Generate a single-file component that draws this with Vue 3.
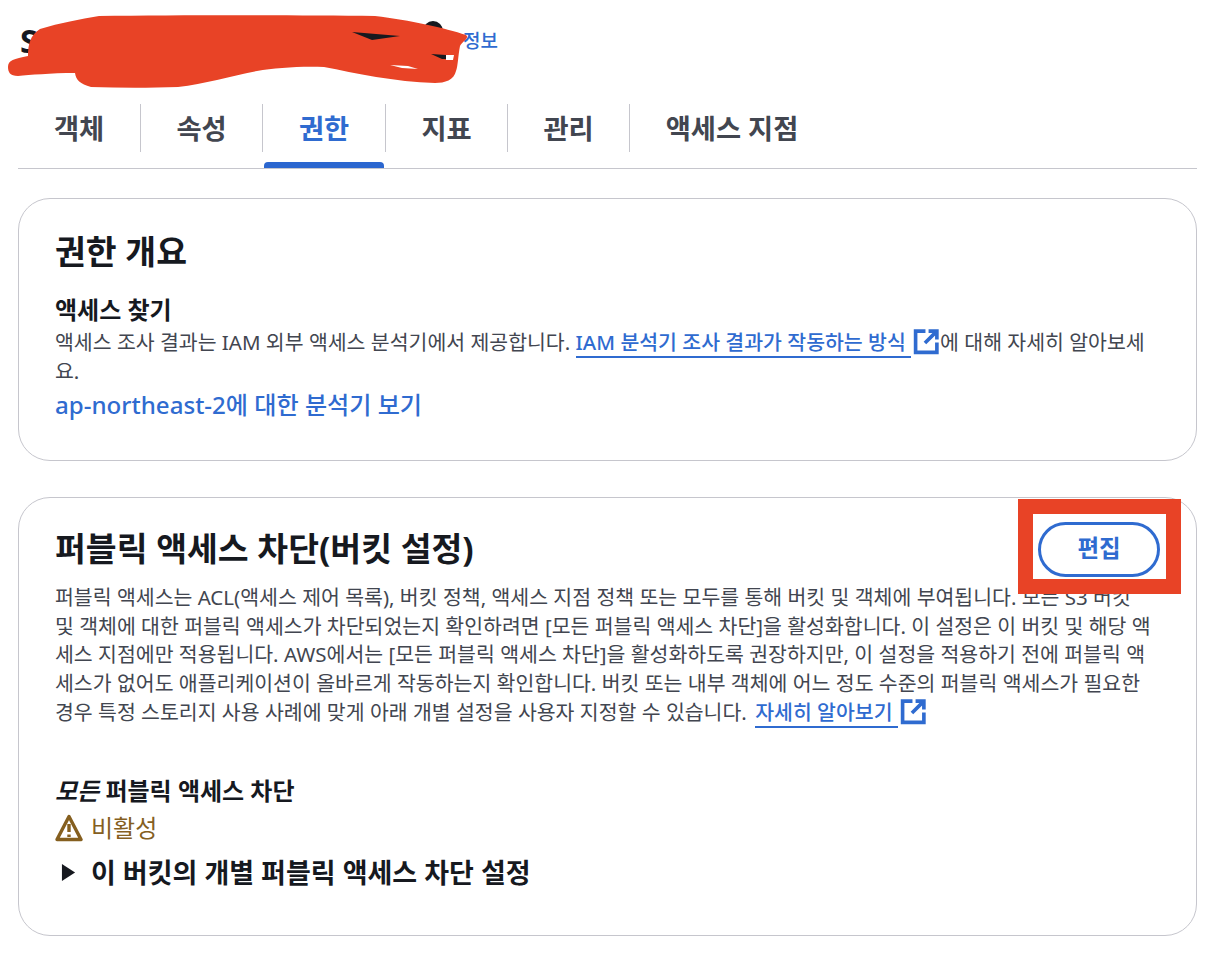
<script setup>
const tabs = [
  { label: "객체", width: 123 },
  { label: "속성", width: 122 },
  { label: "권한", width: 123, active: true },
  { label: "지표", width: 122 },
  { label: "관리", width: 122 },
  { label: "액세스 지점", width: 204 },
];
</script>

<template>
  <div class="page">
    <header class="head">
      <h1 class="bucket">S</h1>
      <a class="info">정보</a>
    </header>

    <nav class="tabs">
      <div
        v-for="tab in tabs"
        :key="tab.label"
        class="tab"
        :class="{ active: tab.active }"
        :style="{ width: tab.width + 'px' }"
      >
        <span class="tab-label">{{ tab.label }}</span>
      </div>
    </nav>

    <section class="card first">
      <h2>권한 개요</h2>
      <h3 class="find">액세스 찾기</h3>
      <p class="body">
        액세스 조사 결과는 IAM 외부 액세스 분석기에서 제공합니다.
        <a class="link">IAM 분석기 조사 결과가 작동하는 방식&nbsp;</a><svg class="ext" viewBox="0 0 26 26"><path d="M12 3H2.5v20.5H23V14M15 3h8v8M23 3 11.5 14.5" /></svg>에 대해 자세히 알아보세<br />요.
      </p>
      <a class="analyzer">ap-northeast-2에 대한 분석기 보기</a>
    </section>

    <section class="card second">
      <div class="card-head">
        <h2>퍼블릭 액세스 차단(버킷 설정)</h2>
        <button class="edit">편집</button>
      </div>
      <p class="body long">
        퍼블릭 액세스는 ACL(액세스 제어 목록), 버킷 정책, 액세스 지점 정책 또는 모두를 통해 버킷 및 객체에 부여됩니다. 모든 S3 버킷<br />
        및 객체에 대한 퍼블릭 액세스가 차단되었는지 확인하려면 [모든 퍼블릭 액세스 차단]을 활성화합니다. 이 설정은 이 버킷 및 해당 액<br />
        세스 지점에만 적용됩니다. AWS에서는 [모든 퍼블릭 액세스 차단]을 활성화하도록 권장하지만, 이 설정을 적용하기 전에 퍼블릭 액<br />
        세스가 없어도 애플리케이션이 올바르게 작동하는지 확인합니다. 버킷 또는 내부 객체에 어느 정도 수준의 퍼블릭 액세스가 필요한<br />
        경우 특정 스토리지 사용 사례에 맞게 아래 개별 설정을 사용자 지정할 수 있습니다.
        <a class="link more">자세히 알아보기&nbsp;</a><svg class="ext" viewBox="0 0 26 26"><path d="M12 3H2.5v20.5H23V14M15 3h8v8M23 3 11.5 14.5" /></svg>
      </p>
      <h3 class="all"><em>모든</em> 퍼블릭 액세스 차단</h3>
      <div class="status">
        <svg class="warn" viewBox="0 0 28 28">
          <path class="warn-tri" d="M14 2.5 26 25.5H2Z" />
          <path class="warn-bang" d="M14 10v8M14 20.5v2.5" />
        </svg>
        <span>비활성</span>
      </div>
      <div class="expand">
        <svg class="caret" viewBox="0 0 16 18"><path d="M1 0 15 9 1 18Z" /></svg>
        <span>이 버킷의 개별 퍼블릭 액세스 차단 설정</span>
      </div>
    </section>

    <!-- 스크린샷 위에 칠해진 표시 -->
    <svg class="scribble" viewBox="0 0 520 100">
      <circle cx="433" cy="31" r="10" fill="#16191f" />
      <path
        d="M8 67C8 60 14 59 28 56 28 45 30 35 40 29 60 23 80 19 99 16 180 15 300 15 375 16 410 20 445 28 466 35 470 38 462 42 460 46 458 56 458 66 456 71 454 80 445 83 435 83 395 82 355 73 324 67 300 66 275 68 257 71 230 76 205 84 178 87 150 88 120 88 91 87 80 84 76 80 75 73 50 73 30 75 18 76 10 76 8 72 8 67Z"
        fill="#e84326"
      />
      <path d="M352 32 400 36 372 40Z" fill="#16191f" />
      <path d="M431 54 446 55 446 59 442 59Z" fill="#16191f" />
      <path d="M446 55 454 55 453 60 446 60Z" fill="#fff" />
      <path d="M390 65 408 66 418 69 402 68Z" fill="#fff" />
    </svg>
    <div class="marker"></div>
  </div>
</template>

<style scoped>
.page {
  position: relative;
  width: 1224px;
  height: 954px;
  box-sizing: border-box;
  padding: 0 27px 0 18px;
  overflow: hidden;
  background: #fff;
  color: #16191f;
  font-family: "Noto Sans", "Noto Sans CJK KR", sans-serif;
}

.head {
  display: flex;
  align-items: center;
  height: 80px;
}

.bucket {
  width: 443px;
  margin: 0 0 0 2px;
  font-size: 32px;
  font-weight: 700;
}

.info {
  font-size: 19px;
  font-weight: 500;
  color: #2f6bd0;
}

.tabs {
  display: flex;
  height: 88px;
  border-bottom: 1px solid #c6c6cd;
}

.tab {
  position: relative;
  box-sizing: border-box;
  height: 72px;
  padding: 24px 0 0;
  text-align: center;
  font-size: 27.3px;
  font-weight: 700;
  line-height: 49px;
  color: #424650;
}

.tab-label {
  display: block;
  height: 48px;
  border-right: 1px solid #c6c6cd;
}

.tab:last-child .tab-label {
  border-right: 0;
}

.tab.active {
  color: #2f6bd0;
}

.tab.active::after {
  content: "";
  position: absolute;
  left: 1px;
  right: 2px;
  bottom: -16px;
  height: 6px;
  border-radius: 4px 4px 0 0;
  background: #2b66cf;
}

.card {
  box-sizing: border-box;
  border: 1px solid #c6c6cd;
  border-radius: 32px;
  padding: 0 36px;
}

.first {
  height: 263px;
  margin-top: 29px;
  padding-top: 29px;
}

.second {
  height: 439px;
  margin-top: 36px;
  padding-top: 27px;
}

h2 {
  margin: 0;
  font-size: 33.5px;
  font-weight: 700;
  line-height: 46px;
}

h3 {
  margin: 0;
  font-size: 24px;
  font-weight: 700;
  line-height: 30px;
}

.find {
  margin: 21px 0 3px;
}

.body {
  margin: 0;
  font-size: 20.5px;
  line-height: 28.7px;
  color: #424650;
  white-space: nowrap;
}

.link {
  color: #2f6bd0;
  font-weight: 500;
  border-bottom: 2px solid #2f6bd0;
}

.more {
  margin-left: 3px;
}

.ext {
  width: 27px;
  height: 27px;
  margin-left: 2px;
  vertical-align: -5px;
}

.ext path {
  fill: none;
  stroke: #2f6bd0;
  stroke-width: 3.5;
}

.analyzer {
  display: block;
  margin-top: 3px;
  font-size: 24.1px;
  font-weight: 500;
  line-height: 34px;
  color: #2f6bd0;
}

.card-head {
  display: flex;
  justify-content: space-between;
  align-items: flex-start;
}

.edit {
  width: 122px;
  height: 55px;
  margin-top: -3px;
  padding: 0 0 5px;
  border: 3px solid #2f6bd0;
  border-radius: 28px;
  background: #fff;
  color: #2f6bd0;
  font-family: inherit;
  font-size: 23.5px;
  font-weight: 700;
}

.long {
  margin-top: 6px;
}

.all {
  margin-top: 49px;
}

.all em {
  font-style: italic;
}

.status {
  display: flex;
  align-items: center;
  gap: 8px;
  margin-top: 5px;
  font-size: 24px;
  line-height: 34px;
  color: #855f1f;
}

.warn {
  width: 28px;
  height: 28px;
}

.warn-tri,
.warn-bang {
  fill: none;
  stroke: #855f1f;
  stroke-width: 3.4;
  stroke-linejoin: round;
}

.expand {
  display: flex;
  align-items: center;
  gap: 15px;
  margin-top: 9px;
  margin-left: 6px;
  font-size: 27px;
  font-weight: 700;
  line-height: 38px;
}

.caret {
  width: 15px;
  height: 17px;
  fill: #16191f;
}

.scribble {
  position: absolute;
  left: 0;
  top: 0;
  width: 520px;
  height: 100px;
}

.marker {
  position: absolute;
  left: 1018px;
  top: 499px;
  width: 163px;
  height: 95px;
  box-sizing: border-box;
  border: 15px solid #e84326;
}
</style>
